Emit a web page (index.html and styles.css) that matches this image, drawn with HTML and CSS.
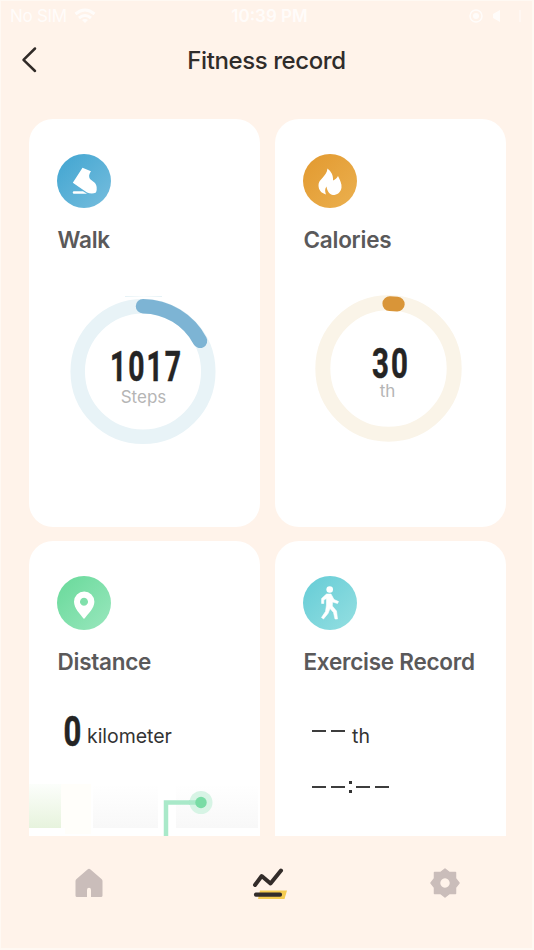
FILE: index.html
```html
<!DOCTYPE html>
<html lang="en">
<head>
<meta charset="utf-8">
<title>Fitness record</title>
<link rel="stylesheet" href="styles.css">
</head>
<body>
<div class="phone">
  <div class="status">
    <div class="status-left"><span class="carrier">No SIM</span>
      <svg width="22" height="16" viewBox="0 0 22 16" fill="none" stroke="#fff" stroke-width="3"><path d="M1.500 6Q11-2 20.500 6M5 10Q11 5 17 10"/><path d="M8 12Q11 10 14 12L11 15Z" fill="#fff" stroke="none"/></svg>
    </div>
    <span class="clock">10:39 PM</span>
    <svg class="status-right" width="60" height="18" viewBox="0 0 60 18"><circle cx="7" cy="9" r="6" fill="none" stroke="#fff" stroke-width="1.500"/><circle cx="7" cy="9" r="3" fill="#fff"/><path d="M24 7l7-4v12l-7-4z" fill="#fff"/><path d="M51 3v12" stroke="#fff"/></svg>
  </div>
  <header class="header">
    <svg class="back" width="20" height="28" viewBox="0 0 20 28"><path d="M14 2.500L2.500 13.800L14 25" fill="none" stroke="#302a27" stroke-width="2.500" stroke-linecap="round" stroke-linejoin="round"/></svg>
    <h1>Fitness record</h1>
  </header>
  <main class="cards">
    <section class="card">
      <svg class="icon" viewBox="0 0 54 54"><defs><linearGradient id="blue" x1="0" y1="0" x2="1" y2="1"><stop stop-color="#41a5d1"/><stop offset="1" stop-color="#76bddd"/></linearGradient></defs><circle cx="27" cy="27" r="27" fill="url(#blue)"/><path d="M25.500 13.800L34 17.300Q30.800 21.500 33 25L38 29Q41 33 39 38.500Q35 40.500 30 38.500L15.800 28.800Z" fill="#fff"/><path d="M17 37.300H26L30 39.800H17A1.200 1.200 0 0 1 17 37.300Z" fill="#fff"/></svg>
      <h2>Walk</h2>
      <div class="meter">
        <svg class="ring" width="150" height="150" viewBox="0 0 150 150"><path d="M57 .500Q76-1 94 .500" fill="none" stroke="#e6f2f6"/><circle cx="75" cy="75.500" r="65.300" fill="none" stroke="#e8f3f7" stroke-width="14.500"/><path d="M75 10.200A65.300 65.300 0 0 1 132 44.800" fill="none" stroke="#7db4d4" stroke-width="14.500" stroke-linecap="round"/></svg>
        <div class="reading"><svg class="num" width="72" height="42" viewBox="0 0 72 42"><text x="2" y="37.500" textLength="73" lengthAdjust="spacingAndGlyphs">1017</text></svg><span class="unit">Steps</span></div>
      </div>
    </section>
    <section class="card">
      <svg class="icon" viewBox="0 0 54 54"><defs><linearGradient id="orange" x1="0" y1="0" x2="1" y2="1"><stop stop-color="#e2992f"/><stop offset="1" stop-color="#ebb04f"/></linearGradient></defs><circle cx="27" cy="27" r="27" fill="url(#orange)"/><path d="M24.500 14.500C28 17.500 30.500 21 30 26.500C32 26 34 24 35 22C37 26 39 30 38.500 33.500C38 38.500 34 41 30 41C27 41 24 37 23.500 32.500C21.500 35 22 38 23 40.500C18 39 15.500 36 15.500 31C15.500 25 23.500 23 24.500 14.500Z" fill="#fff"/></svg>
      <h2>Calories</h2>
      <div class="meter meter-cal">
        <svg class="ring" width="150" height="150" viewBox="0 0 150 150"><circle cx="75.500" cy="75.500" r="65.700" fill="none" stroke="#faf4e8" stroke-width="15"/><path d="M76.800 10.700L84.300 11.100" fill="none" stroke="#d99538" stroke-width="14.800" stroke-linecap="round"/></svg>
        <div class="reading"><svg class="num" width="36" height="42" viewBox="0 0 36 42"><text x="1" y="37.500" textLength="38" lengthAdjust="spacingAndGlyphs">30</text></svg><span class="unit">th</span></div>
      </div>
    </section>
    <section class="card">
      <svg class="icon" viewBox="0 0 54 54"><defs><linearGradient id="green" x1="0" y1="0" x2="1" y2="1"><stop stop-color="#68d99a"/><stop offset="1" stop-color="#99e7bd"/></linearGradient></defs><circle cx="27" cy="27" r="27" fill="url(#green)"/><path fill-rule="evenodd" d="M27 43C23 38 17 32 17 25.700A10.200 10.200 0 0 1 37.400 25.700C37.400 32 31 38 27 43ZM27 21.800a4 4 0 1 0 .01 0Z" fill="#fff"/></svg>
      <h2>Distance</h2>
      <div class="value value-dist"><svg class="num" width="18" height="42" viewBox="0 0 18 42"><text x="-.5" y="37" textLength="20" lengthAdjust="spacingAndGlyphs">0</text></svg><span class="km">kilometer</span></div>
      <svg class="route" width="231" height="52" viewBox="0 0 231 52"><defs><linearGradient id="land" x1="0" y1="0" x2="0" y2="1"><stop stop-color="#fff"/><stop offset="1" stop-color="#f8f8f8"/></linearGradient><linearGradient id="park" x1="0" y1="0" x2="0" y2="1"><stop stop-color="#fcfefb"/><stop offset="1" stop-color="#e7f3dd"/></linearGradient></defs><path d="M64 0H129V44H64ZM147 0H229V44H147Z" fill="url(#land)"/><path d="M0 0H32V44H0Z" fill="url(#park)"/><path d="M32 0H62V50H36V44H32Z" fill="#fffefa"/><path d="M137 52V18.500H172" fill="none" stroke="#a9e9c9" stroke-width="4.500"/><circle cx="172" cy="18.500" r="11.500" fill="#d7f4e5"/><path d="M160 18.500H172" stroke="#a9e9c9" stroke-width="4.500"/><circle cx="172" cy="18.500" r="5.700" fill="#79dca5"/></svg>
    </section>
    <section class="card">
      <svg class="icon" viewBox="0 0 54 54"><defs><linearGradient id="teal" x1="0" y1="0" x2="1" y2="1"><stop stop-color="#65ccd6"/><stop offset="1" stop-color="#94dfe1"/></linearGradient></defs><circle cx="27" cy="27" r="27" fill="url(#teal)"/><circle cx="26.700" cy="13.500" r="3.300" fill="#fff"/><path d="M23.500 18H28L31 23.500L35.500 25.500L34.500 27.500L29.500 26L29.300 30L33.500 35L34.500 43H32L30.500 36.500L27 32.500L25 37.500L20.500 43L18.500 41.500L22.500 35.500L23.500 29V22.500L20.800 24V27.500H18.600V22.500Z" fill="#fff" stroke="#fff" stroke-width=".6" stroke-linejoin="round"/></svg>
      <h2>Exercise Record</h2>
      <div class="value value-count"><i class="dash"></i><i class="dash"></i><span class="th">th</span></div>
      <div class="time"><i class="dash"></i><i class="dash"></i><i class="colon"></i><i class="dash"></i><i class="dash"></i></div>
    </section>
  </main>
  <nav class="tabs">
    <svg width="28" height="30" viewBox="0 0 28 30"><path d="M12.500 1.500Q14 0 15.500 1.500L26.500 11Q27.500 12 27.500 13V27.500Q27.500 29 26 29H16V22Q16 19.800 14 19.800T12 22V29H2Q.5 29 .5 27.500V13Q.5 12 1.500 11Z" fill="#cabdba"/></svg>
    <svg class="chart" width="36" height="34" viewBox="0 0 36 34"><path d="M8 23.500H35L32.500 32H6Z" fill="#f4cb50"/><path d="M3 18L9.700 9L18.500 16.500L29 3.500" fill="none" stroke="#332c2a" stroke-width="4" stroke-linecap="round" stroke-linejoin="round"/><path d="M4 27.700H28" stroke="#332c2a" stroke-width="4.200" stroke-linecap="round"/></svg>
    <svg width="32" height="32" viewBox="0 0 32 32"><path fill-rule="evenodd" d="M16 2L20.500 5.500H26.500V11.500L30 16L26.500 20.500V26.500H20.500L16 30L11.500 26.500H5.500V20.500L2 16L5.500 11.500V5.500H11.500ZM16 11.300a4.700 4.700 0 1 0 .01 0Z" fill="#cabdba"/><path d="M16 2L20.500 5.500H26.500V11.500L30 16L26.500 20.500V26.500H20.500L16 30L11.500 26.500H5.500V20.500L2 16L5.500 11.500V5.500H11.500Z" fill="none" stroke="#cabdba" stroke-width="1.500" stroke-linejoin="round"/></svg>
  </nav>
</div>
</body>
</html>
```
FILE: styles.css
```css
* { box-sizing: border-box; }
body { margin: 0; background: #fff8f1; }
.phone {
  height: 950px;
  overflow: hidden;
  display: flex;
  flex-direction: column;
  background: #fff3ea;
  border: solid #fff9f3;
  border-width: 1px 2px 2px 1px;
  font-family: Inter, "Liberation Sans", sans-serif;
}
.status {
  height: 29px;
  flex: none;
  display: grid;
  grid-template-columns: 1fr auto 1fr;
  align-items: center;
  padding: 0 3px 0 9px;
  color: #fff;
  font-size: 17px;
  opacity: .8;
}
.status-left { display: flex; align-items: center; gap: 7px; }
.carrier { letter-spacing: -.3px; }
.clock { font-weight: 600; }
.status-right { justify-self: end; }
.header {
  height: 60px;
  flex: none;
  display: grid;
  grid-template-columns: 60px 1fr 60px;
  align-items: center;
}
.back { margin-left: 20px; }
h1 {
  margin: 1px 0 0;
  text-align: center;
  font-size: 24px;
  line-height: 30px;
  font-weight: 500;
  color: #302c2a;
  letter-spacing: -.4px;
}
.cards {
  height: 717px;
  flex: none;
  margin-top: 29px;
  padding: 0 27px 0 28px;
  display: grid;
  grid-template-columns: 231px 231px;
  grid-template-rows: 408px 295px;
  column-gap: 15px;
  row-gap: 14px;
}
.card {
  background: #fff;
  border-radius: 24px;
  padding-top: 34.500px;
  display: flex;
  flex-direction: column;
  overflow: hidden;
}
.card:nth-child(n+3) { border-radius: 24px 24px 0 0; }
.icon { width: 54px; height: 54px; margin-left: 28px; flex: none; }
h2 {
  margin: 17.500px 0 0 28.500px;
  font-size: 22.500px;
  line-height: 30px;
  font-weight: 600;
  color: #5a595a;
  white-space: nowrap;
  letter-spacing: -.25px;
}
.meter {
  display: grid;
  width: 150px;
  height: 150px;
  margin: 41px 0 0 38.500px;
  place-items: center;
}
.meter-cal { margin: 38px 0 0 38px; }
.ring, .reading { grid-area: 1 / 1; }
.reading { display: flex; flex-direction: column; align-items: center; padding: 7px 0 0 2px; }
.meter-cal .reading { padding-top: 4px; }
.num {
  overflow: visible;
  font: 700 42.500px Roboto, sans-serif;
  letter-spacing: 3px;
  fill: #242424;
  stroke: #242424;
  stroke-width: .5px;
}
.unit { font-size: 17px; line-height: 20px; color: #b5b5b5; margin-top: 2px; }
.meter-cal .unit { margin: -1px 3px 0 0; }
.value { display: flex; align-items: flex-end; }
.value-dist { margin: 32px 0 0 35px; gap: 5px; height: 42px; }
.km, .th { font-size: 19.500px; line-height: 26px; color: #333; margin-bottom: 2px; }
.km { letter-spacing: -.05px; }
.route { margin-top: auto; flex: none; }
.value-count { margin: 32px 0 0 37px; height: 42px; gap: 5px; }
.dash { width: 14px; height: 2px; background: #3d3d3d; }
.value-count .dash { margin-bottom: 19px; }
.th { margin-left: 2px; }
.time { display: flex; align-items: center; gap: 5px; height: 20px; margin: 26px 0 0 37px; }
.colon { width: 3px; height: 12px; border: solid #333; border-width: 3px 0; margin: 0 -1px; }
.tabs {
  height: 94px;
  display: flex;
  justify-content: space-between;
  align-items: center;
  padding: 0 71px 0 74px;
}
.chart { margin: 2px 0 0 7px; }
```
